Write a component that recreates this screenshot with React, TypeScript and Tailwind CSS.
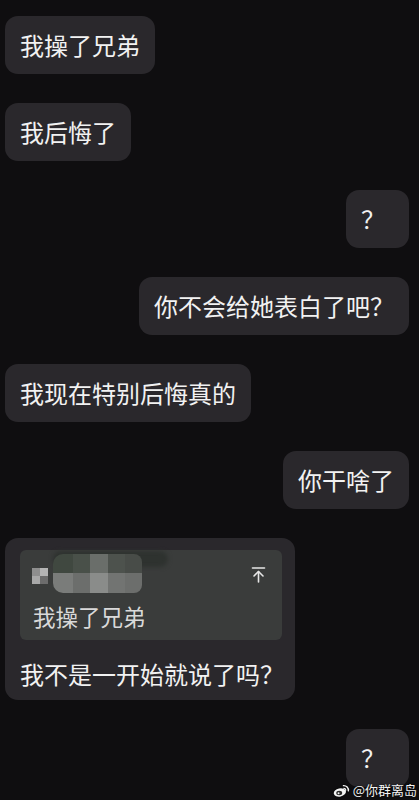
import React from "react";

function Bubble({
  children,
  right = false,
  minW = false,
}: {
  children: React.ReactNode;
  right?: boolean;
  minW?: boolean;
}) {
  return (
    <div className={right ? "flex justify-end pr-[10px]" : "flex justify-start pl-[5px]"}>
      <div
        className={
          minW
            ? "min-w-[63px] whitespace-nowrap rounded-[13px] bg-[#2a282c] px-[15px] py-[15px] text-[24px] leading-[28px] text-[#f2f2f2]"
            : "whitespace-nowrap rounded-[13px] bg-[#2a282c] px-[15px] py-[15px] text-[24px] leading-[28px] text-[#f2f2f2]"
        }
      >
        {children}
      </div>
    </div>
  );
}

function ArrowTop() {
  return (
    <svg width="17" height="17" viewBox="0 0 17 17" fill="none" stroke="#e6e6e6" strokeWidth="1.6" strokeLinecap="round" strokeLinejoin="round">
      <path d="M2.5 2h12" />
      <path d="M8.5 5.5v10.5" />
      <path d="M4 10l4.5-4.5L13 10" />
    </svg>
  );
}

function Mosaic() {
  return (
    <div className="relative h-[44px] w-full">
      <div className="absolute left-[33px] top-[1px] h-[16px] w-[115px] rounded-full bg-[#2e322f] blur-[2px]" />
      <div className="absolute left-[33px] top-[4px] grid grid-cols-[20px_17px_18px_17px_17px] grid-rows-[19px_20px] blur-[0.6px]">
        <div className="rounded-tl-[10px] bg-[#404840]" />
        <div className="bg-[#495049]" />
        <div className="bg-[#6a6e6a]" />
        <div className="bg-[#4d524d]" />
        <div className="rounded-tr-[8px] bg-[#484c48]" />
        <div className="rounded-bl-[10px] bg-[#7a7c7a]" />
        <div className="bg-[#6c6e6c]" />
        <div className="bg-[#8a8c8a]" />
        <div className="bg-[#727472]" />
        <div className="rounded-br-[8px] bg-[#6c6e6c]" />
      </div>
      <div className="absolute left-[12px] top-[18px] grid grid-cols-[8px_8px] grid-rows-[8px_8px] blur-[0.5px]">
        <div className="bg-[#8e8e8e]" />
        <div className="bg-[#b4b4b4]" />
        <div className="bg-[#a8a8a8]" />
        <div className="bg-[#6c6c6c]" />
      </div>
    </div>
  );
}

function WeiboLogo() {
  return (
    <svg width="17" height="13" viewBox="0 0 26 20" style={{ filter: "drop-shadow(0 0 1px rgba(0,0,0,0.9))" }}>
      <ellipse cx="10.5" cy="13" rx="9.5" ry="6.3" fill="#f4f4f4" transform="rotate(-12 10.5 13)" />
      <ellipse cx="9.5" cy="13.8" rx="4.6" ry="3.4" fill="#2a2a2a" />
      <circle cx="8.5" cy="14.2" r="1.5" fill="#f4f4f4" />
      <path d="M16 2.5a7 7 0 0 1 7.5 8" stroke="#f4f4f4" strokeWidth="2.2" fill="none" strokeLinecap="round" />
      <path d="M16.5 6.5a3 3 0 0 1 3 3.5" stroke="#f4f4f4" strokeWidth="1.8" fill="none" strokeLinecap="round" />
    </svg>
  );
}

export default function App() {
  return (
    <div className="relative h-[800px] w-full overflow-hidden bg-[#0f0e10] font-['Noto_Sans_CJK_SC','Noto_Sans',sans-serif]">
      <div className="flex flex-col gap-[29px] pt-[16px]">
        <Bubble>我操了兄弟</Bubble>
        <Bubble>我后悔了</Bubble>
        <Bubble right minW>？</Bubble>
        <Bubble right>你不会给她表白了吧？</Bubble>
        <Bubble>我现在特别后悔真的</Bubble>
        <Bubble right>你干啥了</Bubble>
        <div className="flex justify-start pl-[5px]">
          <div className="w-[290px] rounded-[13px] bg-[#2a282c] pb-[12px] pl-[15px] pr-[13px] pt-[12px]">
            <div className="relative rounded-[6px] bg-[#3a3c3b] pb-[10px]">
              <Mosaic />
              <div className="absolute right-[15px] top-[16px]">
                <ArrowTop />
              </div>
              <div className="mt-[8px] pl-[13px] text-[22.5px] leading-[28px] text-[#d9d9d9]">我操了兄弟</div>
            </div>
            <div className="mt-[20px] whitespace-nowrap text-[24px] leading-[28px] text-[#f2f2f2]">我不是一开始就说了吗？</div>
          </div>
        </div>
        <Bubble right minW>？</Bubble>
      </div>
      <div className="absolute bottom-[3px] right-[2px] flex items-center gap-[3px] text-[13px] leading-[14px] text-[#f4f4f4] [text-shadow:0_0_2px_rgba(0,0,0,0.9)]">
        <WeiboLogo />
        <span>@你群离岛</span>
      </div>
    </div>
  );
}
